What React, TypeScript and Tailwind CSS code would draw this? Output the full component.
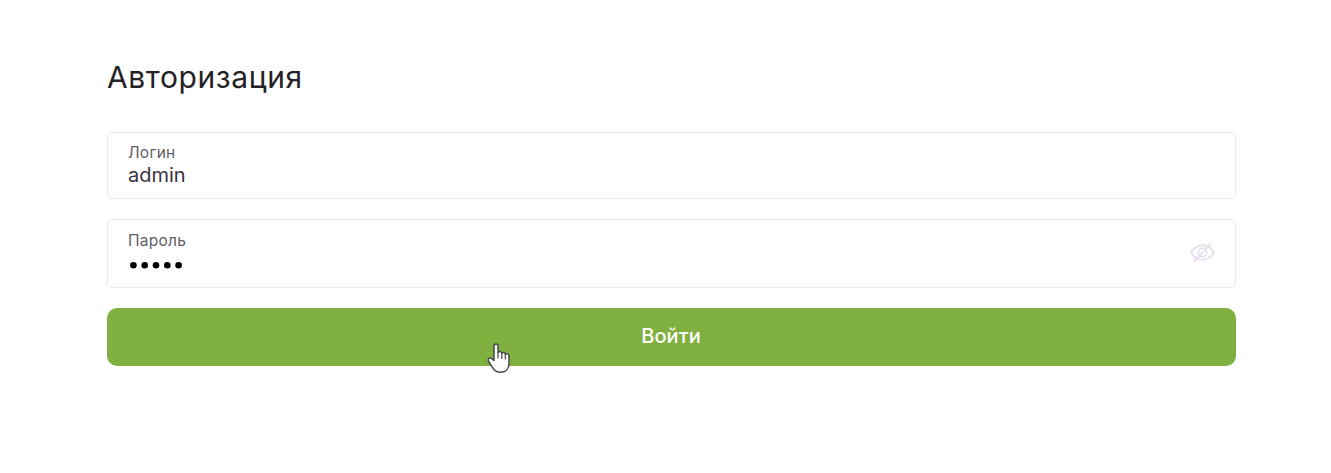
import type { ReactNode } from "react";

function Field({ label, children, action, className }: { label: string; children: ReactNode; action?: ReactNode; className: string }) {
  return (
    <div className={`flex items-center justify-between rounded-[5px] border border-[#eee6f2] bg-white pr-5 pl-5 ${className}`}>
      <div className="flex flex-col">
        <span className="text-[15.5px] leading-5 tracking-[0.25px] text-[#625d68]">{label}</span>
        {children}
      </div>
      {action}
    </div>
  );
}

function HiddenEye() {
  return (
    <svg className="mb-[3px] h-[19px] w-[25px]" viewBox="0 0 26 20" fill="none" stroke="#e7deeb" strokeWidth="1.8" strokeLinecap="round">
      <path d="M1 10C4 5 8 2.2 13 2.2S22 5 25 10C22 15 18 17.8 13 17.8S4 15 1 10Z" />
      <circle cx="13" cy="10" r="4.5" />
      <path d="M21.5 1.2 4.5 18.8" />
    </svg>
  );
}

function HandPointer() {
  return (
    <svg className="absolute top-[342px] left-[486px] h-8 w-6" viewBox="0 0 24 32" fill="#fff" stroke="#4b4650" strokeWidth="1.5" strokeLinejoin="round" strokeLinecap="round">
      <path d="M8 18.5V4.2C8 1.2 12 1.2 12 4.2V10.5C12.7 9 15.5 9.3 15.8 11.2C16.8 9.9 19 10.3 19.3 12.2C20.8 11 23 12 23 14V21.5C23 27 19.5 30.3 14.3 30.3C10.5 30.3 8.6 28.8 7 26.2L2.6 19.5C1.2 17 3.7 15 5.7 16.7Z" />
      <path d="M12 10.5V16M15.8 11.5V16.5M19.3 12.5V17" strokeWidth="1.2" />
    </svg>
  );
}

export default function App() {
  return (
    <main className="relative h-[473px] w-full bg-white pt-[57px] pr-[95px] pl-[107px] font-['Inter','Liberation_Sans',sans-serif]">
      <h1 className="h-[75px] text-[30px] leading-10 tracking-[0.6px] text-[#242226]">Авторизация</h1>
      <form className="flex flex-col">
        <Field label="Логин" className="h-[67px]">
          <span className="text-[20px] leading-[25px] text-[#39343e]">admin</span>
        </Field>
        <Field label="Пароль" className="mt-5 h-[69px]" action={<HiddenEye />}>
          <svg className="h-[25px] w-14" viewBox="0 0 56 25" fill="#000" aria-hidden="true">
            {[5.4, 16.7, 28, 39.3, 50.6].map((x) => (
              <circle key={x} cx={x} cy="14.3" r="3.3" />
            ))}
          </svg>
        </Field>
        <button type="button" className="mt-5 h-[58px] rounded-[10px] bg-[#7fb040] pr-px pb-0.5 text-[20px] font-medium tracking-[0.1px] text-white">
          Войти
        </button>
      </form>
      <HandPointer />
    </main>
  );
}
